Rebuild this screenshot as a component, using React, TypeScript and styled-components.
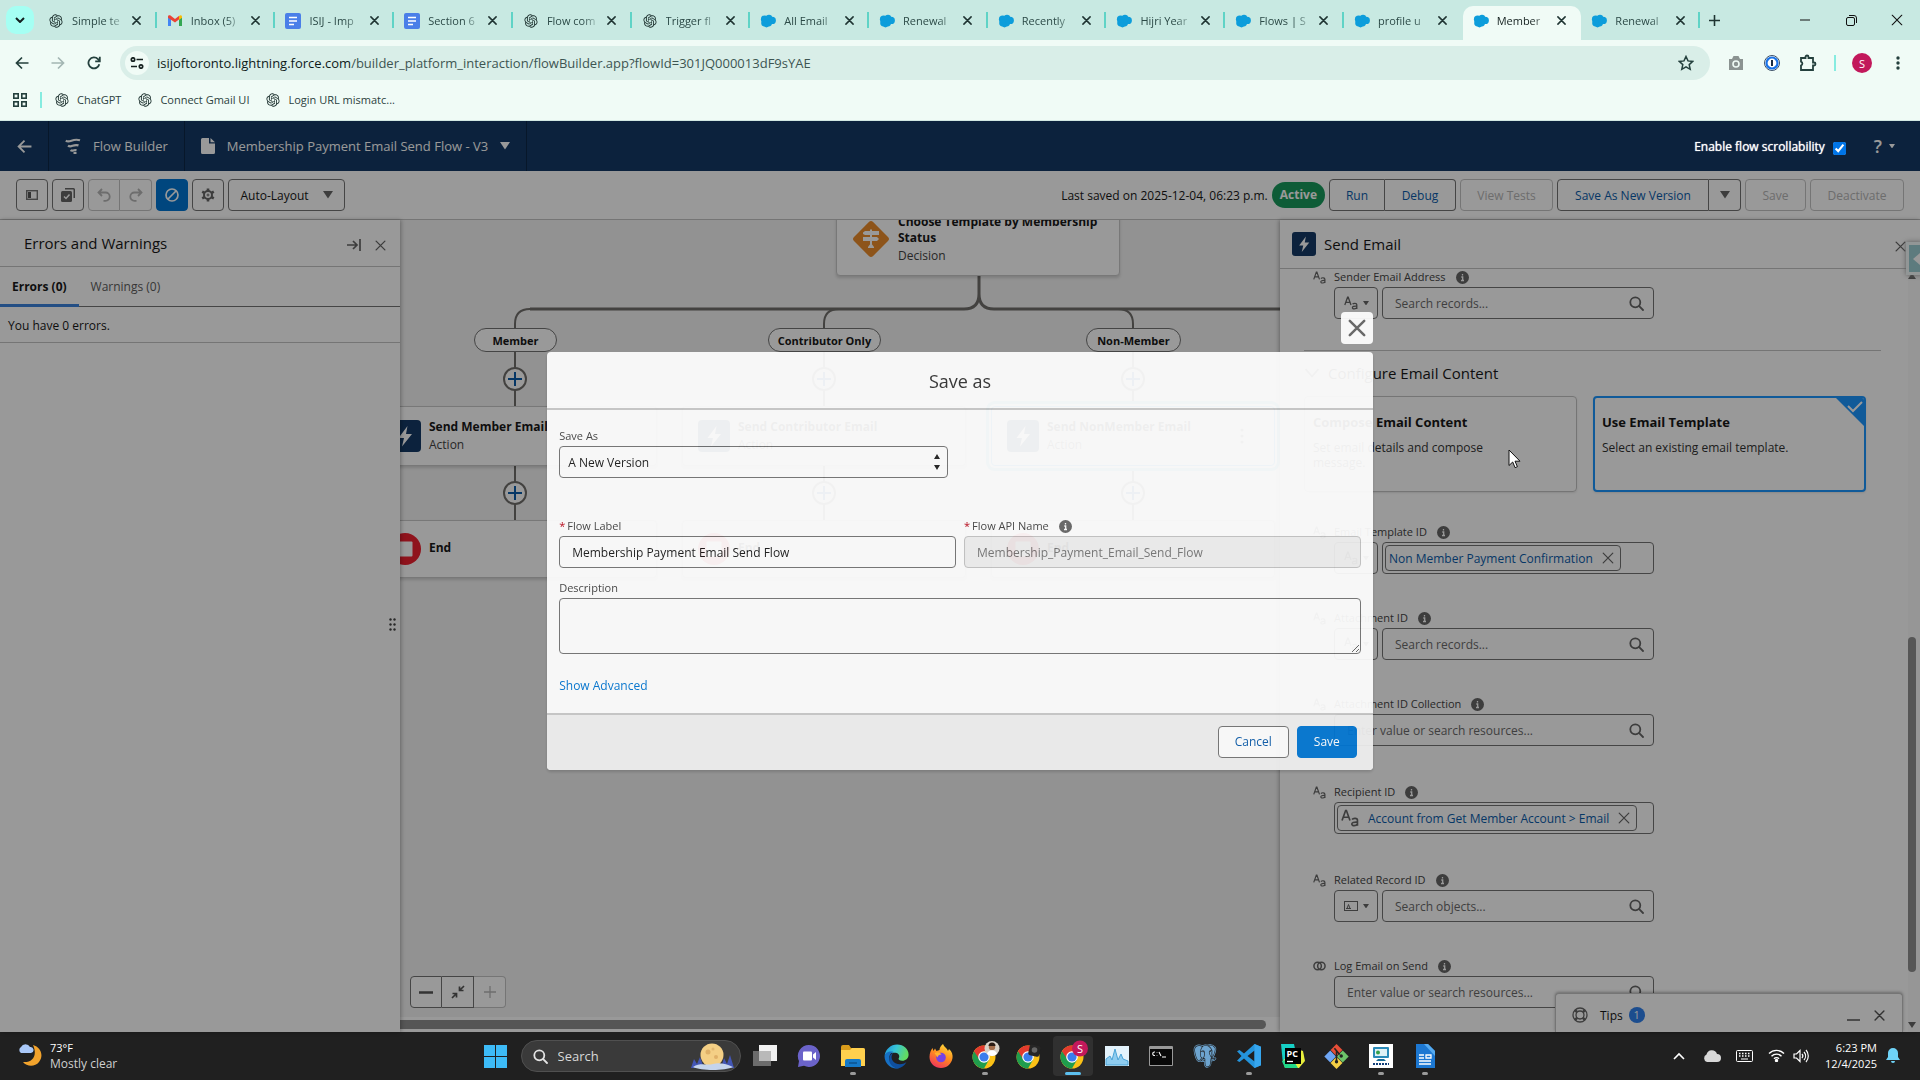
import React from "react";
import styled, { createGlobalStyle, css } from "styled-components";
import { RiOpenaiFill } from "react-icons/ri";
import { BiLogoPostgresql } from "react-icons/bi";

const Global = createGlobalStyle`
  *, *::before, *::after { box-sizing: border-box; }
  body { margin: 0; overflow: hidden; font-family: "Open Sans", "Noto Sans", sans-serif; font-size: 12px; color: #181818; }
  button, input, select, textarea { font: inherit; color: inherit; margin: 0; }
  button { background: none; border: 0; padding: 0; display: inline-flex; align-items: center; justify-content: center; }
  h1, h2, h3, p { margin: 0; font-weight: 400; }
  svg { display: block; flex: none; }
  a { text-decoration: none; }
`;

const Screen = styled.div`
  height: 100vh;
  display: flex;
  flex-direction: column;
`;

/* ---------- Browser ---------- */

const TabStrip = styled.div`
  flex: none;
  height: 40px;
  background: #c8e9e2;
  display: flex;
  padding-left: 6px;
`;
const TabSearch = styled.button`
  width: 28px;
  height: 28px;
  margin-top: 6px;
  border-radius: 10px;
  background: #a5fff3;
`;
const TabList = styled.div`
  flex: 1;
  display: flex;
  min-width: 0;
  margin-left: 4px;
`;
const Tab = styled.div<{ $active?: boolean; $bare?: boolean }>`
  flex: 1;
  min-width: 0;
  height: 34px;
  margin-top: 6px;
  padding: 0 10px 5px;
  display: flex;
  align-items: center;
  gap: 8px;
  position: relative;
  color: #2c4a47;
  &::after {
    content: "";
    position: absolute;
    right: 0;
    top: 6px;
    width: 2px;
    height: 16px;
    background: ${(p) => (p.$active || p.$bare ? "transparent" : "#5fd3c6")};
  }
  ${(p) =>
    p.$active &&
    css`
      background: #f0fbf6;
      border-radius: 10px 10px 0 0;
      color: #14201f;
    `}
`;
const TabTitle = styled.span`
  flex: 1;
  min-width: 0;
  white-space: nowrap;
  font-size: 11px;
  line-height: 20px;
  mask-image: linear-gradient(90deg, #000 70%, rgba(0, 0, 0, 0.15) 100%);
`;
const TabClose = styled.button`
  width: 12px;
  height: 16px;
  margin-right: 4px;
`;
const WindowButtons = styled.div`
  width: 220px;
  display: flex;
  align-items: center;
  padding: 0 13px 0 4px;
  color: #1c2b2a;
`;
const WindowControls = styled.div`
  display: flex;
  gap: 26px;
  margin-left: auto;
`;
const IconButton = styled.button<{ $size?: number }>`
  width: ${(p) => p.$size ?? 20}px;
  height: ${(p) => p.$size ?? 20}px;
`;
const AddressRow = styled.div`
  flex: none;
  height: 46px;
  background: #f0fbf6;
  display: flex;
  align-items: center;
  padding: 0 12px;
  gap: 16px;
`;
const Omnibox = styled.div`
  flex: 1;
  height: 34px;
  border-radius: 17px;
  background: #d9eee8;
  display: flex;
  align-items: center;
  padding: 0 14px 0 5px;
  gap: 8px;
`;
const SiteInfo = styled.button`
  width: 24px;
  height: 24px;
  border-radius: 50%;
  background: #f0fbf6;
`;
const Url = styled.div`
  flex: 1;
  font-size: 13px;
  line-height: 20px;
  color: #3d5552;
  b { font-weight: 400; color: #0e1b1a; }
`;
const BrowserTools = styled.div`
  display: flex;
  align-items: center;
  gap: 16px;
`;
const Rule = styled.span`
  width: 2px;
  height: 16px;
  background: #86ece0;
`;
const Avatar = styled.span`
  width: 20px;
  height: 20px;
  border-radius: 50%;
  background: #c2185b;
  color: #fff;
  font-size: 11px;
  display: flex;
  align-items: center;
  justify-content: center;
`;
const Bookmarks = styled.div`
  flex: none;
  height: 35px;
  background: #f0fbf6;
  border-bottom: 1px solid #d2e8e3;
  display: flex;
  align-items: center;
  gap: 12px;
  padding: 0 12px 6px;
`;
const Bookmark = styled.a`
  display: flex;
  align-items: center;
  gap: 7px;
  margin-right: 4px;
  font-size: 11px;
  line-height: 16px;
  color: #2c4240;
`;

/* ---------- Builder frame ---------- */

const Builder = styled.div`
  flex: 1;
  min-height: 0;
  position: relative;
  display: flex;
  flex-direction: column;
  background: #fff;
`;
const Header = styled.header`
  flex: none;
  height: 50px;
  background: #143a66;
  color: #fff;
  display: flex;
`;
const HeaderCell = styled.div`
  display: flex;
  align-items: center;
  gap: 12px;
  padding: 0 16px;
  border-right: 1px solid #0d2747;
  font-size: 13px;
  line-height: 20px;
`;
const HeaderRight = styled.div`
  margin-left: auto;
  display: flex;
  align-items: center;
  gap: 28px;
  padding-right: 25px;
`;
const ScrollToggle = styled.label`
  position: relative;
  z-index: 3;
  display: flex;
  align-items: center;
  gap: 8px;
  font-size: 12px;
  text-shadow: 0 0 1px #fff;
  input { width: 13px; height: 13px; accent-color: #0075e8; margin: 4px 0 0; }
`;
const HelpButton = styled.button`
  gap: 7px;
  font-size: 18px;
  font-weight: 600;
`;
const Toolbar = styled.div`
  flex: none;
  height: 49px;
  display: flex;
  align-items: center;
  gap: 4px;
  padding: 0 16px;
  border-bottom: 1px solid #c4c4c4;
`;
const Spacer = styled.span`
  flex: 1;
`;
const Group = styled.div`
  display: flex;
  > button:not(:first-child) { border-left-width: 0; border-top-left-radius: 0; border-bottom-left-radius: 0; }
  > button:not(:last-child) { border-top-right-radius: 0; border-bottom-right-radius: 0; }
`;
const Button = styled.button<{ $kind?: "plain" | "brand" | "disabled"; $w?: number; $dark?: boolean }>`
  height: 32px;
  min-width: ${(p) => p.$w ?? 32}px;
  border: 1px solid #747474;
  border-radius: 4px;
  background: #fff;
  font-size: 12px;
  color: ${(p) => (p.$dark ? "#181818" : "#0b5cab")};
  gap: 14px;
  white-space: nowrap;
  ${(p) => p.$kind === "brand" && css`background: #0176d3; border-color: #0176d3; color: #fff;`}
  ${(p) => p.$kind === "disabled" && css`border-color: #c4c4c4; color: #b6b6b6;`}
`;
const Saved = styled.span`
  font-size: 12px;
`;
const ActiveBadge = styled.span`
  height: 26px;
  padding: 0 8px;
  border-radius: 13px;
  background: #189a5c;
  color: #fff;
  font-weight: 700;
  font-size: 12px;
  line-height: 26px;
`;
const Work = styled.div`
  flex: 1;
  min-height: 0;
  display: flex;
`;

/* ---------- Left panel ---------- */

const LeftPanel = styled.aside`
  width: 400px;
  flex: none;
  position: relative;
  z-index: 1;
  background: #fff;
  box-shadow: 1px 0 4px rgba(0, 0, 0, 0.3);
`;
const PanelHead = styled.div`
  height: 47px;
  display: flex;
  align-items: center;
  gap: 10px;
  padding: 0 12px 0 24px;
  border-bottom: 1px solid #c4c4c4;
  h2 { flex: 1; font-size: 15px; line-height: 20px; }
  button { margin-top: 4px; }
`;
const PanelTabs = styled.div`
  height: 40px;
  display: flex;
  border-bottom: 1px solid #747474;
`;
const PanelTab = styled.button<{ $on?: boolean }>`
  height: 40px;
  padding: 2px 12px 0;
  font-size: 12px;
  color: ${(p) => (p.$on ? "#181818" : "#5c5c5c")};
  font-weight: ${(p) => (p.$on ? 700 : 400)};
  border-bottom: 3px solid ${(p) => (p.$on ? "#3b82dd" : "transparent")};
`;
const PanelMessage = styled.p`
  height: 36px;
  padding: 0 8px;
  line-height: 37px;
  border-bottom: 1px solid #c4c4c4;
`;
const Grip = styled.span`
  position: absolute;
  right: 4px;
  top: 49%;
`;

/* ---------- Canvas ---------- */

const CanvasArea = styled.main`
  flex: 1;
  min-width: 0;
  display: flex;
  flex-direction: column;
`;
const Canvas = styled.div`
  flex: 1;
  position: relative;
  overflow: hidden;
  background: #f3f3f3;
`;
const Wires = styled.svg`
  position: absolute;
  left: 0;
  top: 0;
`;
const Node = styled.div<{ $x: number; $y: number; $h: number; $selected?: boolean }>`
  position: absolute;
  left: ${(p) => p.$x}px;
  top: ${(p) => p.$y}px;
  width: 284px;
  height: ${(p) => p.$h}px;
  padding: 0 12px 0 15px;
  display: flex;
  align-items: center;
  gap: 8px;
  background: #fff;
  border: 1px solid #c9c9c9;
  border-radius: 4px;
  box-shadow: 0 2px 3px rgba(0, 0, 0, 0.15);
  ${(p) => p.$selected && css`border-color: #1b96ff; box-shadow: 0 0 0 2px #fff, 0 0 0 5px #5fc3dd;`}
`;
const NodeText = styled.div`
  flex: 1;
  font-size: 12px;
  line-height: 16px;
  color: #444;
  h3 { font-size: 12px; line-height: 16px; font-weight: 700; color: #181818; margin-bottom: 2px; }
`;
const Branch = styled.span<{ $x: number; $w: number }>`
  position: absolute;
  left: ${(p) => p.$x}px;
  top: 108px;
  width: ${(p) => p.$w}px;
  height: 24px;
  border: 1px solid #747474;
  border-radius: 12px;
  background: #fff;
  font-weight: 700;
  font-size: 11px;
  line-height: 23px;
  text-align: center;
`;
const AddButton = styled.button<{ $x: number; $y: number }>`
  position: absolute;
  left: ${(p) => p.$x - 12}px;
  top: ${(p) => p.$y}px;
  width: 24px;
  height: 24px;
  border-radius: 50%;
  border: 2px solid #706e6b;
  background: #fff;
`;
const ZoomBar = styled.div`
  position: absolute;
  left: 10px;
  bottom: 9px;
`;
const HScroll = styled.div`
  height: 15px;
  background: #fff;
  padding: 3px 14px 3px 0;
  &::before {
    content: "";
    display: block;
    height: 9px;
    border-radius: 0 5px 5px 0;
    background: #8f8f8f;
  }
`;

/* ---------- Right panel ---------- */

const RightPanel = styled.aside`
  width: 640px;
  flex: none;
  position: relative;
  z-index: 1;
  background: #fff;
  box-shadow: -1px 0 4px rgba(0, 0, 0, 0.3);
  display: flex;
  flex-direction: column;
`;
const PropertyHead = styled.div`
  flex: none;
  height: 49px;
  padding: 0 14px 0 12px;
  display: flex;
  align-items: center;
  gap: 8px;
  border-bottom: 1px solid #c4c4c4;
  h2 { flex: 1; font-size: 15px; line-height: 20px; }
  button { margin-top: 4px; }
`;
const PropertyBody = styled.div`
  flex: 1;
  min-height: 0;
  display: flex;
  overflow: hidden;
`;
const Form = styled.div`
  flex: 1;
  padding-left: 24px;
`;
const VScroll = styled.div`
  width: 12px;
  background: #fafafa;
  display: flex;
  flex-direction: column;
  align-items: center;
  padding: 4px 4px 4px 0;
`;
const VThumb = styled.span`
  width: 8px;
  border-radius: 4px;
  background: #8f8f8f;
  margin-top: 358px;
  flex: 0 0 335px;
  margin-bottom: auto;
`;
const Field = styled.div<{ $gap?: number }>`
  margin-bottom: ${(p) => p.$gap ?? 36}px;
  padding-left: 30px;
`;
const FieldLabel = styled.div`
  height: 16px;
  margin: 0 0 2px -21px;
  display: flex;
  align-items: center;
  gap: 8px;
  color: #444;
  font-size: 11px;
  line-height: 16px;
  > svg:last-child { margin-left: 2px; }
`;
const FieldRow = styled.div`
  display: flex;
  gap: 4px;
  width: 320px;
`;
const TypeButton = styled.button`
  width: 44px;
  height: 32px;
  flex: none;
  border: 1px solid #747474;
  border-radius: 4px;
  gap: 5px;
`;
const Lookup = styled.div`
  flex: 1;
  min-width: 0;
  height: 32px;
  border: 1px solid #747474;
  border-radius: 4px;
  display: flex;
  align-items: center;
  padding: 0 9px 0 2px;
  input {
    flex: 1;
    min-width: 0;
    border: 0;
    background: none;
    outline: 0;
    padding: 0 10px;
    font-size: 12px;
  }
  input::placeholder { color: #6a6a6a; }
`;
const Pill = styled.span`
  height: 26px;
  border: 1px solid #747474;
  border-radius: 4px;
  display: flex;
  align-items: center;
  gap: 9px;
  padding: 0 6px 0 3px;
  font-size: 12px;
  color: #0b5cab;
  white-space: nowrap;
`;
const SectionTitle = styled.h3`
  border-top: 1px solid #c4c4c4;
  margin: -5px 27px 0 0;
  height: 46px;
  padding-bottom: 2px;
  display: flex;
  align-items: center;
  gap: 8px;
  font-size: 15px;
`;
const Choices = styled.div`
  display: flex;
  gap: 16px;
  width: 562px;
  margin-bottom: 32px;
`;
const Choice = styled.button<{ $on?: boolean }>`
  flex: 1;
  height: 96px;
  position: relative;
  overflow: hidden;
  border: ${(p) => (p.$on ? "2px solid #1b96ff" : "1px solid #c4c4c4")};
  padding: ${(p) => (p.$on ? "16px 7px" : "17px 8px")};
  border-radius: 4px;
  box-shadow: 0 1px 2px rgba(0, 0, 0, 0.1);
  display: flex;
  flex-direction: column;
  align-items: flex-start;
  justify-content: flex-start;
  gap: 10px;
  text-align: left;
  color: #333;
  line-height: 15px;
  b { font-size: 13px; line-height: 16px; color: #181818; }
  span { max-width: 190px; }
`;
const Corner = styled.svg`
  position: absolute;
  right: 0;
  top: 0;
`;
const Tips = styled.div`
  position: absolute;
  right: 17px;
  bottom: 0;
  width: 348px;
  height: 39px;
  background: #fff;
  border: 1px solid #c4c4c4;
  border-bottom: 0;
  border-radius: 4px 4px 0 0;
  box-shadow: 0 -1px 3px rgba(0, 0, 0, 0.3);
  display: flex;
  align-items: center;
  padding: 4px 13px 0 16px;
  gap: 6px;
  font-size: 12px;
  strong { font-weight: 400; margin-left: 6px; }
`;
const Count = styled.span`
  width: 16px;
  height: 16px;
  border-radius: 50%;
  background: #2f80ed;
  color: #fff;
  font-size: 11px;
  line-height: 16px;
  text-align: center;
`;
const SideHandle = styled.button`
  position: absolute;
  right: 0;
  top: 25px;
  width: 11px;
  height: 27px;
  background: #9cced3;
  box-shadow: 0 0 0 3px #f4fbfb, 0 0 5px 3px #999;
  justify-content: flex-end;
`;

/* ---------- Dialog ---------- */

const Overlay = styled.div`
  position: absolute;
  inset: 0;
  z-index: 2;
  background: rgba(0, 0, 0, 0.4);
  display: flex;
  flex-direction: column;
  align-items: center;
  padding-top: 191px;
`;
const Dialog = styled.div`
  width: 43%;
  min-width: 640px;
  opacity: 0.93;
  display: flex;
  flex-direction: column;
`;
const DialogClose = styled.button`
  align-self: flex-end;
  width: 32px;
  height: 32px;
  margin-bottom: 8px;
  border-radius: 4px;
  background: #fff;
`;
const DialogCard = styled.form`
  border-radius: 4px;
  background: #fff;
  overflow: hidden;
  box-shadow: 0 2px 3px rgba(0, 0, 0, 0.16);
`;
const DialogTitle = styled.h2`
  height: 58px;
  border-bottom: 2px solid #c9c9c9;
  font-size: 18px;
  line-height: 58px;
  text-align: center;
  color: #333;
`;
const DialogBody = styled.div`
  padding: 18px 12px 17px;
  display: grid;
  grid-template-columns: 1fr 1fr;
  column-gap: 8px;
`;
const Item = styled.div<{ $wide?: boolean; $below?: number }>`
  grid-column: ${(p) => (p.$wide ? "1 / -1" : "auto")};
  margin-bottom: ${(p) => p.$below ?? 12}px;
  label {
    display: flex;
    align-items: center;
    gap: 2px;
    font-size: 11px;
    line-height: 16px;
    margin-bottom: 2px;
    color: #444;
  }
  em { color: #ba0517; font-style: normal; }
  label svg { margin-left: 8px; }
`;
const controlLook = css`
  display: block;
  width: 100%;
  height: 32px;
  border: 1px solid #747474;
  border-radius: 4px;
  background: transparent;
  padding: 0 12px;
  font-size: 12px;
`;
const SelectWrap = styled.div`
  width: calc(50% - 12px);
  position: relative;
  svg { position: absolute; right: 7px; top: 7px; pointer-events: none; }
`;
const Select = styled.select`
  ${controlLook}
  appearance: none;
  padding: 0 8px;
`;
const TextInput = styled.input`
  ${controlLook}
  &:disabled { background: #f0f0f0; border-color: #c4c4c4; color: #757575; }
`;
const TextArea = styled.textarea`
  ${controlLook}
  height: 56px;
  resize: vertical;
`;
const Advanced = styled.a`
  grid-column: 1 / -1;
  justify-self: start;
  margin-top: 10px;
  font-size: 12px;
  line-height: 20px;
  color: #0176d3;
`;
const DialogFooter = styled.div`
  height: 57px;
  background: #f0f0f0;
  border-top: 2px solid #c9c9c9;
  display: flex;
  align-items: center;
  justify-content: flex-end;
  gap: 8px;
  padding: 0 16px 2px 0;
`;
const Pointer = styled.svg`
  position: absolute;
  left: 1508px;
  top: 328px;
  z-index: 4;
`;

/* ---------- Taskbar ---------- */

const Taskbar = styled.footer`
  flex: none;
  height: 48px;
  background: #202020;
  color: #fff;
  display: grid;
  grid-template-columns: 1fr auto 1fr;
  font-size: 12px;
  line-height: 16px;
`;
const Weather = styled.div`
  display: flex;
  align-items: center;
  gap: 8px;
  padding-left: 18px;
  font-size: 11px;
  span { color: #cfcfcf; display: block; font-size: 12px; }
`;
const Apps = styled.div`
  display: flex;
  align-items: center;
`;
const AppButton = styled.button<{ $state?: "running" | "active" }>`
  width: 44px;
  height: 48px;
  position: relative;
  &::before {
    content: "";
    position: absolute;
    inset: 4px 2px;
    border-radius: 4px;
    background: ${(p) => (p.$state === "active" ? "#303030" : "transparent")};
  }
  &::after {
    content: "";
    position: absolute;
    bottom: 5px;
    height: 3px;
    border-radius: 2px;
    width: ${(p) => (p.$state === "active" ? 16 : 6)}px;
    background: ${(p) => (p.$state === "active" ? "#5cc0f0" : p.$state ? "#9a9a9a" : "transparent")};
  }
  svg { position: relative; }
`;
const SearchPill = styled.label`
  width: 220px;
  height: 32px;
  margin: 0 2px 0 3px;
  border: 1px solid #505050;
  border-radius: 16px;
  background: #3a3a3a;
  display: flex;
  align-items: center;
  gap: 10px;
  padding: 0 5px 0 11px;
  input { flex: 1; min-width: 0; border: 0; background: none; outline: 0; padding: 0; font-size: 13px; }
  input::placeholder { color: #d8d8d8; }
`;
const Tray = styled.div`
  display: flex;
  align-items: center;
  justify-content: flex-end;
  padding-right: 19px;
  gap: 15px;
`;
const Sound = styled.div`
  display: flex;
  gap: 8px;
`;
const Clock = styled.div`
  text-align: right;
  font-size: 11px;
  line-height: 16px;
`;
const ClockGroup = styled.div`
  display: flex;
  align-items: center;
  gap: 8px;
`;

/* ---------- Icons ---------- */

const Cross = ({ s = 10, w = 1.6, c = "#444" }) => (
  <svg width={s} height={s} viewBox="0 0 10 10" stroke={c} strokeWidth={w} strokeLinecap="round">
    <path d="M1 1l8 8M9 1L1 9" />
  </svg>
);
const Cloud = () => (
  <svg width="16" height="16" viewBox="0 0 16 16" fill="#0d9ddb">
    <circle cx="4.600" cy="6.200" r="3.700" /><circle cx="9" cy="5" r="3.200" /><circle cx="12.200" cy="7.400" r="3.700" /><circle cx="8.600" cy="10" r="3.400" /><circle cx="4.600" cy="10" r="3.400" /><circle cx="6.500" cy="12" r="2.400" />
  </svg>
);
const Docs = () => (
  <svg width="16" height="16" viewBox="0 0 16 16">
    <rect width="16" height="16" rx="2" fill="#4a7fe8" />
    <path d="M4 4.500h8M4 8h8M4 11.500h5" stroke="#fff" strokeWidth="1.600" />
  </svg>
);
const Gmail = () => (
  <svg width="16" height="16" viewBox="0 0 16 16">
    <path d="M1 4v9h3V6z" fill="#4285f4" /><path d="M15 4v9h-3V6z" fill="#34a853" />
    <path d="M1 3.800C1 2.200 2.800 2 3.800 2.800L8 6l4.200-3.200v3.500L8 9.500 1 4.800z" fill="#ea4335" />
    <path d="M12 3l1-.6c1-.4 2 .3 2 1.400v1L12 7z" fill="#fbbc04" />
  </svg>
);
const Gpt = () => <RiOpenaiFill size={16} color="#1f3331" />;
const Triangle = ({ s = 8, c = "#666", up = false }) => (
  <svg width={s} height={s * 0.75} viewBox="0 0 8 6" fill={c}><path d={up ? "M0 6h8L4 0z" : "M0 0h8L4 6z"} /></svg>
);
const Info = () => (
  <svg width="13" height="13" viewBox="0 0 13 13">
    <circle cx="6.500" cy="6.500" r="6.500" fill="#666" />
    <path d="M6.500 3v1.600M5.300 6h1.400v3.500M5 9.500h3" stroke="#fff" strokeWidth="1.300" fill="none" />
  </svg>
);
const TypeText = ({ s = 14 }) => (
  <svg width={s} height={s} viewBox="0 0 14 14" fill="none" stroke="#666" strokeWidth="1.300">
    <path d="M.8 9L3.600 1.200h.6L7 9M1.800 6.400h4.200M8.600 8.200c.8-1.200 4.200-1.400 4.200.6V13M12.800 10.200c-3-.2-4.400.4-4.400 1.500 0 1.600 3.400 1.700 4.400-.2" />
  </svg>
);
const Glass = ({ c = "#666", s = 15 }) => (
  <svg width={s} height={s} viewBox="0 0 15 15" fill="none" stroke={c} strokeWidth="1.800" strokeLinecap="round"><circle cx="6.300" cy="6.300" r="5" /><path d="M10.200 10.200L14 14" /></svg>
);
const Bolt = ({ s = 32 }) => (
  <svg width={s} height={s} viewBox="0 0 32 32"><rect width="32" height="32" rx="4" fill="#143a66" /><path d="M18.500 6l-9 12h5.500l-2 8.500 10-12.500h-6z" fill="#fff" /></svg>
);
const EndIcon = () => (
  <svg width="32" height="32" viewBox="0 0 32 32"><circle cx="16" cy="16" r="16" fill="#ee2030" /><rect x="8.500" y="8.500" width="15" height="15" rx="1" fill="#fff" /></svg>
);
const Diamond = () => (
  <svg width="38" height="38" viewBox="0 0 38 38">
    <rect x="5.500" y="5.500" width="27" height="27" rx="3" transform="rotate(45 19 19)" fill="#ec8d2c" />
    <path d="M11 12.500l2-1.500h14v4H13l-2-1zM11 17h14l2 2-2 2H11zM18 9.500h2V25h-2zM16 27l3-4 3 4v1h-6z" fill="#fff" />
  </svg>
);
const Plus = ({ c = "#0b5cab", s = 14, w = 2 }) => (
  <svg width={s} height={s} viewBox="0 0 14 14" stroke={c} strokeWidth={w}><path d="M7 0v14M0 7h14" /></svg>
);
const Arrow = ({ c = "#24403d", flip = false, s = 14 }) => (
  <svg width={s} height={s} viewBox="0 0 14 14" fill="none" stroke={c} strokeWidth="1.700" transform={flip ? "scale(-1 1)" : undefined}><path d="M13.500 7H1.500M7 1.500L1.500 7 7 12.500" /></svg>
);
const Undo = ({ flip = false }) => (
  <svg width="14" height="14" viewBox="0 0 14 14" fill="none" stroke="#b6b6b6" strokeWidth="1.800" transform={flip ? "scale(-1 1)" : undefined}><path d="M5 1L1.500 4.500 5 8M1.800 4.500h6.700a4.200 4.200 0 010 8.400H6.500" /></svg>
);
const Chrome = ({ badge }: { badge?: "photo" | "device" | "letter" }) => (
  <svg width="30" height="32" viewBox="0 0 30 32">
    <circle cx="14" cy="17" r="11.500" fill="#fbc116" />
    <path d="M14 17L4 11.300A11.500 11.500 0 0014 28.500l5-8.700z" fill="#1f9d4d" />
    <path d="M4 11.300A11.500 11.500 0 0124 11.300H14L9.500 19.500z" fill="#e33b2e" />
    <circle cx="14" cy="17" r="5.800" fill="#fff" /><circle cx="14" cy="17" r="4.600" fill="#3b7ded" />
    {badge === "photo" && (<><circle cx="22" cy="8.500" r="7.500" fill="#d9d2c8" /><circle cx="22" cy="7" r="3.200" fill="#a56f4c" /><path d="M18.500 6a3.500 3.500 0 017 0z" fill="#2b1c14" /><path d="M17 14c1-5 9-5 10 0a7.500 7.500 0 01-10 0z" fill="#fff" /></>)}
    {badge === "device" && (<><rect x="15" y="5" width="11" height="11" rx="2" transform="rotate(12 20 10)" fill="#262626" /><circle cx="20.500" cy="10" r="2.800" fill="#666" /></>)}
    {badge === "letter" && (<><circle cx="22" cy="8.500" r="8" fill="#c2185b" /><text x="22" y="12.500" fontSize="11" textAnchor="middle" fill="#fff">S</text></>)}
  </svg>
);

const appIcons: { name: string; state?: "running" | "active"; icon: React.ReactNode }[] = [
  { name: "Task view", icon: <svg width="24" height="24" viewBox="0 0 24 24"><rect x="6" y="1" width="18" height="16" fill="#f2f2f2" /><rect x="0" y="7" width="18" height="15" fill="#6c6c6c" /><rect x="6" y="7" width="12" height="10" fill="#b9b9b9" /></svg> },
  { name: "Chat", icon: <svg width="24" height="24" viewBox="0 0 24 24"><path d="M12 1a11 11 0 11-5 20.800L1 23l1-6A11 11 0 0112 1z" fill="#6b63c9" /><rect x="6" y="7.500" width="9" height="9" rx="1" fill="#fff" /><path d="M16 10.500l3-2.500v8l-3-2.500z" fill="#fff" /></svg> },
  { name: "File Explorer", state: "running", icon: <svg width="26" height="24" viewBox="0 0 26 24"><path d="M1 3a2 2 0 012-2h6l2 3h12a2 2 0 012 2v4H1z" fill="#d99c1b" /><path d="M1 6h9l2-2h11a2 2 0 012 2v16H1z" fill="#ffd04e" /><path d="M5 23v-6a2 2 0 012-2h12a2 2 0 012 2v6z" fill="#1579c8" /><path d="M9 19h8" stroke="#0d538f" strokeWidth="1.500" /></svg> },
  { name: "Edge", icon: (
    <svg width="25" height="25" viewBox="0 0 24 24">
      <defs><linearGradient id="edgeTop" x1="0" y1="0" x2="1" y2=".3"><stop offset="0" stopColor="#1c8fdc" /><stop offset=".5" stopColor="#38c5d6" /><stop offset="1" stopColor="#62dc62" /></linearGradient></defs>
      <path d="M.6 11C1.500 5 6.500.5 12.500.5 19 .5 23.600 5 23.600 10c0 4-3 6-6 6-2.500 0-4-1-3.600-2 1.500-2 .5-5-3-5.500C6 8 2.500 8.500.6 11z" fill="url(#edgeTop)" />
      <path d="M.5 12C1 8 5 6.500 9 7.500c-4 1.500-5 6-3 10 2 3.800 6 6 9 5.500A11.500 11.500 0 01.5 12z" fill="#1670c4" />
      <path d="M9 8.500c-3 3-2 8 2 10 3.500 1.600 7.500 1 10.500-1-2 3.500-5 5.500-8.500 6-5-.5-8.500-5-8-9.500C5.300 11.500 6.500 9.500 9 8.500z" fill="#0f4f9e" />
    </svg>) },
  { name: "Firefox", icon: (
    <svg width="24" height="24" viewBox="0 0 24 24">
      <defs><linearGradient id="foxFire" x1=".8" y1="0" x2=".3" y2="1"><stop offset="0" stopColor="#ffe23c" /><stop offset=".5" stopColor="#ff8a1f" /><stop offset="1" stopColor="#f0345d" /></linearGradient></defs>
      <path d="M14 0c1 3 4 4 5 7l1-2c3 2.500 4 6 3.500 9C22.500 20 18 24 12 24S.5 19.500.5 13c0-4 1.500-7 3-9l1 3L6 4.500 7.500 7l3-1C10.500 3.500 12 1.500 14 0z" fill="url(#foxFire)" />
      <circle cx="12" cy="13.500" r="4.800" fill="#7542e5" />
      <path d="M5.500 9c3-1.500 5.500-.5 7 1.500-2.500.3-3.500 1-4 3z" fill="#ffb12e" />
    </svg>) },
  { name: "Chrome, first profile", state: "running", icon: <Chrome badge="photo" /> },
  { name: "Chrome, second profile", icon: <Chrome badge="device" /> },
  { name: "Chrome, profile S", state: "active", icon: <Chrome badge="letter" /> },
  { name: "Monitor", icon: <svg width="24" height="20" viewBox="0 0 24 20"><rect width="24" height="20" fill="#e3f2fb" /><path d="M1 19v-6l4-3 2 4 3-11 3 11 3-6 2 5 5 2v4z" fill="#8fcdf0" stroke="#4ba3d6" /></svg> },
  { name: "Command Prompt", icon: <svg width="24" height="20" viewBox="0 0 24 20"><rect width="24" height="20" rx="1" fill="#999" /><rect x="1" y="3" width="22" height="16" fill="#080808" /><path d="M6 6c-3-.6-3 4 0 3.500M8 6.500v.6M8 9v.6M10 6l2 4M13 11h4" stroke="#fff" strokeWidth="1.100" fill="none" /></svg> },
  { name: "PostgreSQL", icon: <BiLogoPostgresql size={28} color="#6da4cf" /> },
  { name: "Visual Studio Code", state: "running", icon: <svg width="24" height="24" viewBox="0 0 24 24"><path d="M17.500 0L24 2.800v18.400L17.500 24 7 14.500 2.500 18 0 16.800 4.500 12 0 7.200 2.500 6 7 9.500zM17.500 6.500L10.500 12l7 5.500z" fill="#2494dc" fillRule="evenodd" /><path d="M17.500 0L24 2.800v18.400L17.500 24z" fill="#36a6ee" /></svg> },
  { name: "PyCharm", icon: <svg width="24" height="24" viewBox="0 0 24 24"><path d="M0 0h13l3 14L2 20z" fill="#16cfc5" /><path d="M13 4l9 3 2 10-6 7H4l-2-7z" fill="#e8ee3c" /><path d="M1 17l10-3 6 10H4z" fill="#21d789" /><rect x="4" y="4" width="16" height="16" fill="#000" /><text x="5.500" y="13" fontSize="9" fontWeight="700" fill="#fff">PC</text><path d="M6 17.500h6" stroke="#fff" strokeWidth="1.300" /></svg> },
  { name: "Git", icon: <svg width="25" height="25" viewBox="0 0 24 24"><path d="M12 0l5.700 5.700L12 11.500 6.300 5.700z" fill="#e84e37" /><path d="M6 6.200l5.500 5.800L6 17.700.3 12z" fill="#6fa6f5" /><path d="M18 6.200l5.700 5.800-5.700 5.700-5.700-5.700z" fill="#6cc46a" /><path d="M12 12.300l5.700 5.900L12 24l-5.700-5.800z" fill="#f4cf45" /><path d="M10 4l5 6M12 6v11M17 11v1" stroke="#222" strokeWidth="1.500" /><circle cx="12" cy="17" r="1.600" fill="#222" /><circle cx="16.500" cy="11.500" r="1.600" fill="#222" /></svg> },
  { name: "Desktop tool", state: "running", icon: <svg width="24" height="24" viewBox="0 0 24 24"><rect width="24" height="24" fill="#fff" /><rect x="4" y="3" width="16" height="11" rx="1" fill="#2a8ab8" /><rect x="6" y="5" width="12" height="7" fill="#dff1f5" /><circle cx="9" cy="8.500" r="2" fill="#35a04a" /><path d="M9 15h6l2 2H7z" fill="#176a94" /><path d="M4 20h16" stroke="#123f7a" strokeWidth="2" strokeDasharray="2 1" /></svg> },
  { name: "Writer", state: "running", icon: <svg width="20" height="24" viewBox="0 0 20 24"><path d="M1 0h12l7 7v17H1z" fill="#1d78d2" /><path d="M13 0l7 7v5L9 0z" fill="#55aaf0" /><path d="M4 11h5M4 14h5M4 17h12M4 20h12M11 11h5v3h-5z" stroke="#fff" strokeWidth="1.300" fill="none" /></svg> },
];

const tabs = [
  ["Simple te", "gpt"], ["Inbox (5)", "gmail"], ["ISIJ - Imp", "docs"], ["Section 6", "docs"], ["Flow com", "gpt"], ["Trigger fl", "gpt"],
  ["All Email", "sf"], ["Renewal", "sf"], ["Recently", "sf"], ["Hijri Year", "sf"], ["Flows | S", "sf"], ["profile u", "sf"], ["Member", "sf"], ["Renewal", "sf"],
];
const tabIcon: Record<string, React.ReactNode> = { gpt: <Gpt />, gmail: <Gmail />, docs: <Docs />, sf: <Cloud /> };

function Browser() {
  return (
    <>
      <TabStrip>
        <TabSearch aria-label="Search tabs"><svg width="10" height="6" viewBox="0 0 10 6" fill="none" stroke="#14201f" strokeWidth="2"><path d="M1 1l4 4 4-4" /></svg></TabSearch>
        <TabList>
          {tabs.map(([title, icon], i) => (
            <Tab key={i} $active={i === 12} $bare={i === 11}>
              {tabIcon[icon]}
              <TabTitle>{title}</TabTitle>
              <TabClose aria-label="Close tab"><Cross s={9} w={1.7} c="#1f3432" /></TabClose>
            </Tab>
          ))}
        </TabList>
        <WindowButtons>
          <IconButton aria-label="New tab"><Plus c="#1f3432" s={11} w={2} /></IconButton>
          <WindowControls>
            <IconButton aria-label="Minimize"><svg width="10" height="2"><path d="M0 1h10" stroke="#111" /></svg></IconButton>
            <IconButton aria-label="Restore"><svg width="11" height="11" viewBox="0 0 11 11" fill="none" stroke="#111"><rect x=".5" y="2.500" width="8" height="8" rx="1.500" /><path d="M3 .5h5a2.500 2.500 0 012.500 2.500v5" /></svg></IconButton>
            <IconButton aria-label="Close window"><Cross s={12} w={0.9} c="#111" /></IconButton>
          </WindowControls>
        </WindowButtons>
      </TabStrip>
      <AddressRow>
        <IconButton aria-label="Back"><Arrow /></IconButton>
        <IconButton aria-label="Forward"><Arrow flip c="#a3b6b3" /></IconButton>
        <IconButton aria-label="Reload"><svg width="14" height="14" viewBox="0 0 14 14" fill="none" stroke="#24403d" strokeWidth="1.800"><path d="M12.300 8.200A5.500 5.500 0 1111 3.200L12.500 5" /><path d="M12.800.8v4.600H8.200" /></svg></IconButton>
        <Omnibox>
          <SiteInfo aria-label="Site information"><svg width="14" height="12" viewBox="0 0 14 12" fill="none" stroke="#14201f" strokeWidth="1.700"><circle cx="3" cy="2.500" r="1.700" /><path d="M6.500 2.500H13M1 9.500h6" /><circle cx="11" cy="9.500" r="1.700" /></svg></SiteInfo>
          <Url><b>isijoftoronto.lightning.force.com</b>/builder_platform_interaction/flowBuilder.app?flowId=301JQ000013dF9sYAE</Url>
          <IconButton aria-label="Bookmark this tab"><svg width="16" height="16" viewBox="0 0 16 16" fill="none" stroke="#24403d" strokeWidth="1.500"><path d="M8 1.500l2 4.400 4.800.5-3.600 3.200 1 4.700L8 11.900l-4.200 2.400 1-4.700L1.200 6.400 6 5.900z" /></svg></IconButton>
        </Omnibox>
        <BrowserTools>
          <IconButton aria-label="Screenshot"><svg width="16" height="14" viewBox="0 0 16 14"><path d="M1 3h3l1.500-3h5L12 3h3v11H1z" fill="#8b9391" /><circle cx="8" cy="8" r="3" fill="none" stroke="#f0fbf6" strokeWidth="1.600" /></svg></IconButton>
          <IconButton aria-label="Password manager"><svg width="16" height="16" viewBox="0 0 16 16"><circle cx="8" cy="8" r="7.500" fill="#fff" stroke="#3b4f66" /><circle cx="8" cy="8" r="5.500" fill="none" stroke="#1a73e8" strokeWidth="2.200" /><path d="M8 5v6" stroke="#1b2b40" strokeWidth="2" /></svg></IconButton>
          <IconButton aria-label="Extensions"><svg width="18" height="18" viewBox="0 0 18 18" fill="none" stroke="#24403d" strokeWidth="1.800"><path d="M2 4h4.500V3a1.500 1.500 0 013 0v1H14v4.500h1a1.500 1.500 0 010 3h-1V16H2v-4.500a2 2 0 000-3.800z" /></svg></IconButton>
          <Rule />
          <Avatar>S</Avatar>
          <IconButton aria-label="Menu"><svg width="4" height="14" viewBox="0 0 4 14" fill="#24403d"><circle cx="2" cy="2" r="1.700" /><circle cx="2" cy="7" r="1.700" /><circle cx="2" cy="12" r="1.700" /></svg></IconButton>
        </BrowserTools>
      </AddressRow>
      <Bookmarks>
        <IconButton $size={16} aria-label="Apps"><svg width="14" height="14" viewBox="0 0 14 14" fill="none" stroke="#24403d" strokeWidth="1.600"><rect x=".8" y=".8" width="4.400" height="4.400" /><rect x="8.800" y=".8" width="4.400" height="4.400" /><rect x=".8" y="8.800" width="4.400" height="4.400" /><rect x="8.800" y="8.800" width="4.400" height="4.400" /></svg></IconButton>
        <Rule />
        <Bookmark href="#"><Gpt />ChatGPT</Bookmark>
        <Bookmark href="#"><Gpt />Connect Gmail UI</Bookmark>
        <Bookmark href="#"><Gpt />Login URL mismatc...</Bookmark>
      </Bookmarks>
    </>
  );
}

function TopBars() {
  return (
    <>
      <Header>
        <HeaderCell><IconButton $size={16} aria-label="Back to setup"><Arrow c="#fff" s={15} /></IconButton></HeaderCell>
        <HeaderCell>
          <svg width="16" height="16" viewBox="0 0 16 16" fill="none" stroke="#fff" strokeWidth="2.200">
            <path d="M.8 2.600C5 5.500 7.500-.2 15 2.300M3 7.600c3.500 2.600 5-2 10.500-.2M5.500 12.200c2.200 1.600 3-.8 6 .2M8.500 15h3" />
          </svg>
          Flow Builder
        </HeaderCell>
        <HeaderCell>
          <svg width="14" height="16" viewBox="0 0 14 16" fill="#fff"><path d="M0 1.500A1.500 1.500 0 011.500 0H8v5.500h6v9a1.500 1.500 0 01-1.500 1.500h-11A1.500 1.500 0 010 14.500zM9.500 0L14 4.200H9.500z" /></svg>
          Membership Payment Email Send Flow - V3
          <Triangle s={10} c="#fff" />
        </HeaderCell>
        <HeaderRight>
          <ScrollToggle>Enable flow scrollability<input type="checkbox" defaultChecked /></ScrollToggle>
          <HelpButton aria-label="Help">?<Triangle s={6} c="#fff" /></HelpButton>
        </HeaderRight>
      </Header>
      <Toolbar>
        <Button aria-label="Toggle toolbox"><svg width="12" height="10" viewBox="0 0 12 10"><rect x=".7" y=".7" width="10.600" height="8.600" fill="none" stroke="#747474" strokeWidth="1.400" /><rect x="2" y="2" width="3" height="6" fill="#555" /></svg></Button>
        <Button aria-label="Select elements"><svg width="14" height="14" viewBox="0 0 14 14"><path d="M4 0h8.500A1.500 1.500 0 0114 1.500V10h-1.500V1.500H4z" fill="#666" /><rect y="3" width="11" height="11" rx="1.500" fill="#666" /><path d="M3 8.500l2 2 3.500-4" stroke="#fff" strokeWidth="1.500" fill="none" /></svg></Button>
        <Group>
          <Button $kind="disabled" aria-label="Undo"><Undo /></Button>
          <Button $kind="disabled" aria-label="Redo"><Undo flip /></Button>
        </Group>
        <Button $kind="brand" aria-label="Errors and warnings"><svg width="14" height="14" viewBox="0 0 14 14" fill="none" stroke="#fff" strokeWidth="1.700"><circle cx="7" cy="7" r="6" /><path d="M11 3l-8 8" /></svg></Button>
        <Button aria-label="Settings"><svg width="14" height="14" viewBox="0 0 14 14" fill="none" stroke="#666"><circle cx="7" cy="7" r="4" strokeWidth="2" /><circle cx="7" cy="7" r="1" strokeWidth="1" /><path d="M7 .5v2.500M7 11v2.500M1.200 3.700l2.200 1.200M10.600 9.100l2.200 1.200M1.200 10.300l2.200-1.200M10.600 4.900l2.200-1.200" strokeWidth="2.600" /></svg></Button>
        <Button $w={117} $dark>Auto-Layout<Triangle s={10} /></Button>
        <Spacer />
        <Saved>Last saved on 2025-12-04, 06:23 p.m.</Saved>
        <ActiveBadge>Active</ActiveBadge>
        <Group>
          <Button $w={56}>Run</Button>
          <Button $w={71}>Debug</Button>
        </Group>
        <Button $w={93} $kind="disabled">View Tests</Button>
        <Group>
          <Button $w={152}>Save As New Version</Button>
          <Button aria-label="More save options"><Triangle s={10} /></Button>
        </Group>
        <Button $w={61} $kind="disabled">Save</Button>
        <Button $w={94} $kind="disabled">Deactivate</Button>
      </Toolbar>
    </>
  );
}

function FlowCanvas() {
  const columns = [
    { x: 115, label: "Member", w: 83, title: "Send Member Email" },
    { x: 424, label: "Contributor Only", w: 113, title: "Send Contributor Email" },
    { x: 733, label: "Non-Member", w: 95, title: "Send NonMember Email" },
  ];
  return (
    <CanvasArea>
      <Canvas>
        <Wires width="1200" height="320" fill="none" stroke="#706e6b" strokeWidth="2">
          <path strokeWidth="3" d="M579 56v18q0 15 -15 15H130M579 74q0 15 15 15H1200" />
          <path d="M115 108v-4q0 -15 15 -15M424 108v-4q0 -15 15 -15M733 108v-4q0 -15 -15 -15M115 132v168M424 132v168M733 132v168" />
        </Wires>
        <Node $x={436} $y={-18} $h={74}><Diamond /><NodeText><h3>Choose Template by Membership Status</h3>Decision</NodeText></Node>
        {columns.map((c, i) => (
          <React.Fragment key={c.label}>
            <Branch $x={c.x - Math.floor(c.w / 2)} $w={c.w}>{c.label}</Branch>
            <AddButton $x={c.x} $y={147} aria-label={"Add element after " + c.label}><Plus /></AddButton>
            <Node $x={c.x - 142} $y={186} $h={60} $selected={i === 2}>
              <Bolt />
              <NodeText><h3>{c.title}</h3>Action</NodeText>
              {i === 2 && <svg width="24" height="18" fill="#666"><circle cx="4" cy="3" r="1.500" /><circle cx="4" cy="9" r="1.500" /><circle cx="4" cy="15" r="1.500" /></svg>}
            </Node>
            <AddButton $x={c.x} $y={261} aria-label={"Add element before end of " + c.label}><Plus /></AddButton>
            <Node $x={c.x - 142} $y={300} $h={58}><EndIcon /><NodeText><h3>End</h3></NodeText></Node>
          </React.Fragment>
        ))}
        <ZoomBar>
          <Group>
            <Button aria-label="Zoom out"><svg width="14" height="3"><path d="M0 1.500h14" stroke="#555" strokeWidth="2.500" /></svg></Button>
            <Button aria-label="Zoom to fit"><svg width="14" height="14" viewBox="0 0 14 14" fill="none" stroke="#555" strokeWidth="1.700"><path d="M13 1L8.500 5.500M8.500 1.500v4h4M1 13l4.500-4.500M1.500 8.500h4v4" /></svg></Button>
            <Button $kind="disabled" aria-label="Zoom in"><Plus c="#b6b6b6" s={12} w={1.5} /></Button>
          </Group>
        </ZoomBar>
      </Canvas>
      <HScroll />
    </CanvasArea>
  );
}

type ResourceProps = { id: string; label: string; placeholder?: string; type?: "text" | "object"; toggle?: boolean; pill?: string; gap?: number };

function ResourceField({ id, label, placeholder, type, toggle, pill, gap }: ResourceProps) {
  return (
    <Field $gap={gap}>
      <FieldLabel>
        {toggle ? <svg width="13" height="12" viewBox="0 0 14 12" fill="none" stroke="#666" strokeWidth="1.600"><circle cx="5" cy="6" r="4" /><circle cx="9" cy="6" r="4" /></svg> : <TypeText s={13} />}
        <label htmlFor={id}>{label}</label>
        <Info />
      </FieldLabel>
      <FieldRow>
        {type && (
          <TypeButton aria-label={"Type for " + label}>
            {type === "text" ? <TypeText s={14} /> : <svg width="14" height="10" viewBox="0 0 14 10" fill="none" stroke="#666"><rect x=".5" y=".5" width="13" height="9" /><path d="M3 7.500l1.500-4 1.500 4M2 7.500h5" /></svg>}
            <Triangle s={6} />
          </TypeButton>
        )}
        <Lookup>
          {pill && (
            <Pill>{!type && <TypeText s={18} />}{pill}<button aria-label={"Remove " + pill}><Cross s={12} w={1} c="#666" /></button></Pill>
          )}
          <input id={id} placeholder={placeholder} />
          {!pill && <Glass />}
        </Lookup>
      </FieldRow>
    </Field>
  );
}

function Properties() {
  return (
    <RightPanel>
      <PropertyHead><Bolt s={24} /><h2>Send Email</h2><IconButton $size={12} aria-label="Close panel"><Cross s={11} w={1.2} c="#666" /></IconButton></PropertyHead>
      <PropertyBody>
        <Form>
          <ResourceField id="sender" label="Sender Email Address" placeholder="Search records..." type="text" />
          <SectionTitle><svg width="16" height="10" viewBox="0 0 16 10" fill="none" stroke="#666" strokeWidth="1.800"><path d="M1.500 1L8 8.500 14.500 1" /></svg>Configure Email Content</SectionTitle>
          <Choices>
            <Choice><b>Compose Email Content</b><span>Set email details and compose message.</span></Choice>
            <Choice $on>
              <b>Use Email Template</b>Select an existing email template.
              <Corner width="28" height="28" viewBox="0 0 28 28"><path d="M0 0h28v28z" fill="#1b96ff" /><path d="M12 8l5 5 9-9" fill="none" stroke="#fff" strokeWidth="2" /></Corner>
            </Choice>
          </Choices>
          <ResourceField id="template" label="Email Template ID" type="text" pill="Non Member Payment Confirmation" />
          <ResourceField id="attachment" label="Attachment ID" placeholder="Search records..." type="text" />
          <ResourceField id="collection" label="Attachment ID Collection" placeholder="Enter value or search resources..." gap={38} />
          <ResourceField id="recipient" label="Recipient ID" pill="Account from Get Member Account > Email" gap={38} />
          <ResourceField id="record" label="Related Record ID" placeholder="Search objects..." type="object" />
          <ResourceField id="log" label="Log Email on Send" placeholder="Enter value or search resources..." toggle />
        </Form>
        <VScroll><Triangle s={8} up /><VThumb /><Triangle s={8} /></VScroll>
      </PropertyBody>
      <SideHandle aria-label="Open side tool"><svg width="7" height="12" viewBox="0 0 7 12" fill="#fff"><path d="M7 0v12L0 6z" /></svg></SideHandle>
      <Tips>
        <svg width="16" height="16" viewBox="0 0 16 16" fill="none" stroke="#666"><circle cx="8" cy="8" r="7" strokeWidth="1.300" /><circle cx="8" cy="8" r="4" strokeWidth="1.300" /><path d="M3 3l2.300 2.300M13 3l-2.300 2.300M3 13l2.300-2.300M13 13l-2.300-2.300" strokeWidth="2.500" /></svg>
        <strong>Tips</strong><Count>1</Count><Spacer />
        <IconButton aria-label="Minimize tips"><svg width="13" height="14"><path d="M0 12h13" stroke="#555" strokeWidth="1.500" /></svg></IconButton>
        <IconButton aria-label="Close tips"><Cross s={11} w={1.3} c="#555" /></IconButton>
      </Tips>
    </RightPanel>
  );
}

function SaveDialog() {
  return (
    <Overlay>
      <Dialog role="dialog" aria-labelledby="save-title">
        <DialogClose aria-label="Close"><Cross s={18} w={1.4} c="#666" /></DialogClose>
        <DialogCard onSubmit={(e) => e.preventDefault()}>
          <DialogTitle id="save-title">Save as</DialogTitle>
          <DialogBody>
            <Item $wide $below={40}>
              <label htmlFor="save-as">Save As</label>
              <SelectWrap>
                <Select id="save-as"><option>A New Version</option><option>A New Flow</option></Select>
                <svg width="8" height="18" viewBox="0 0 8 18" fill="#222"><path d="M1 6l3-5 3 5zM1 12l3 5 3-5z" /></svg>
              </SelectWrap>
            </Item>
            <Item>
              <label htmlFor="flow-label"><em>*</em>Flow Label</label>
              <TextInput id="flow-label" defaultValue="Membership Payment Email Send Flow" />
            </Item>
            <Item>
              <label htmlFor="api-name"><em>*</em>Flow API Name<Info /></label>
              <TextInput id="api-name" disabled defaultValue="Membership_Payment_Email_Send_Flow" />
            </Item>
            <Item $wide>
              <label htmlFor="description">Description</label>
              <TextArea id="description" />
            </Item>
            <Advanced href="#">Show Advanced</Advanced>
          </DialogBody>
          <DialogFooter>
            <Button type="button" $w={71}>Cancel</Button>
            <Button $w={60} $kind="brand">Save</Button>
          </DialogFooter>
        </DialogCard>
      </Dialog>
    </Overlay>
  );
}

function Desktop() {
  return (
    <Taskbar>
      <Weather>
        <svg width="24" height="26" viewBox="0 0 24 26"><path d="M15 2c8 2 11 11 6 17-4 5-12 5-16 0 9 1 15-6 10-17z" fill="#f2a32c" /><path d="M3 10a3.500 3.500 0 010-6 5 5 0 019 0 3 3 0 011 6z" fill="#a9c8f8" /></svg>
        <div>73°F<span>Mostly clear</span></div>
      </Weather>
      <Apps>
        <AppButton aria-label="Start"><svg width="23" height="23" viewBox="0 0 23 23" fill="#3dbbf7"><path d="M0 0h11v11H0zM12 0h11v11H12zM0 12h11v11H0zM12 12h11v11H12z" /></svg></AppButton>
        <SearchPill>
          <Glass c="#e4e4e4" />
          <input aria-label="Search" placeholder="Search" />
          <svg width="44" height="28" viewBox="0 0 44 28"><circle cx="21" cy="13" r="11.500" fill="#f4cf85" /><circle cx="17" cy="10" r="2.500" fill="#dfb068" /><circle cx="25" cy="15" r="2" fill="#dfb068" /><circle cx="22" cy="7" r="1.500" fill="#e3b871" /><path d="M0 26l3-9 3 5 3-7 4 11zM30 26l3-10 3 6 3-9 4 13z" fill="#4356b5" /><path d="M2 25c8-5 14-1 20-3s14 0 20 3c-8 4-32 4-40 0z" fill="#c5d4ec" /></svg>
        </SearchPill>
        {appIcons.map((a) => <AppButton key={a.name} aria-label={a.name} $state={a.state}>{a.icon}</AppButton>)}
      </Apps>
      <Tray>
        <svg width="18" height="10" viewBox="0 0 18 10" fill="none" stroke="#fff" strokeWidth="1.600"><path d="M4 8l5-5 5 5" /></svg>
        <svg width="18" height="12" viewBox="0 0 18 12" fill="#d8d8d8"><path d="M4 12a4 4 0 01-.5-7.500A5.500 5.500 0 0114 4a4 4 0 010 8z" /></svg>
        <svg width="17" height="12" viewBox="0 0 17 12" fill="none" stroke="#fff"><rect x=".5" y=".5" width="16" height="11" rx="1" /><path d="M3 3.500h11M3 6h11" strokeDasharray="1.500 1.500" strokeWidth="1.400" /><path d="M5 9h7" /></svg>
        <Sound>
          <svg width="17" height="13" viewBox="0 0 17 13" fill="none" stroke="#fff" strokeWidth="1.400"><path d="M1 4.500a10.500 10.500 0 0115 0M3.500 7.200a7 7 0 0110 0M6 9.700a3.500 3.500 0 015 0" /><circle cx="8.500" cy="11.500" r="1" fill="#fff" /></svg>
          <svg width="17" height="14" viewBox="0 0 17 14" fill="none" stroke="#fff" strokeWidth="1.200"><path d="M1 5h2.500L7 1.500v11L3.500 9H1zM9 5a3 3 0 010 4M11 3a6 6 0 010 8M13 1a9 9 0 010 12" /></svg>
        </Sound>
        <ClockGroup>
          <Clock>6:23 PM<br />12/4/2025</Clock>
          <svg width="16" height="16" viewBox="0 0 16 16" fill="#6fd3f7"><path d="M8 0a5 5 0 015 5v4l2 3H1l2-3V5a5 5 0 015-5zM6 13h4a2 2 0 01-4 0z" /></svg>
        </ClockGroup>
      </Tray>
    </Taskbar>
  );
}

export default function App() {
  return (
    <Screen>
      <Global />
      <Browser />
      <Builder>
        <TopBars />
        <Work>
          <LeftPanel>
            <PanelHead>
              <h2>Errors and Warnings</h2>
              <IconButton $size={16} aria-label="Dock panel"><svg width="14" height="12" viewBox="0 0 14 12" fill="none" stroke="#666" strokeWidth="1.700"><path d="M0 6h9.500M6 2l4 4-4 4M13 0v12" /></svg></IconButton>
              <IconButton $size={16} aria-label="Close panel"><Cross s={11} w={1.2} c="#666" /></IconButton>
            </PanelHead>
            <PanelTabs><PanelTab $on>Errors (0)</PanelTab><PanelTab>Warnings (0)</PanelTab></PanelTabs>
            <PanelMessage>You have 0 errors.</PanelMessage>
            <Grip><svg width="7" height="13" fill="#444"><circle cx="1.500" cy="1.500" r="1.200" /><circle cx="5.500" cy="1.500" r="1.200" /><circle cx="1.500" cy="6.500" r="1.200" /><circle cx="5.500" cy="6.500" r="1.200" /><circle cx="1.500" cy="11.500" r="1.200" /><circle cx="5.500" cy="11.500" r="1.200" /></svg></Grip>
          </LeftPanel>
          <FlowCanvas />
          <Properties />
        </Work>
        <SaveDialog />
        <Pointer width="13" height="20" viewBox="0 0 13 20"><path d="M1 1v15.500l3.700-3.500 2.400 5.700 2.300-1-2.400-5.500H12z" fill="#fff" stroke="#111" /></Pointer>
      </Builder>
      <Desktop />
    </Screen>
  );
}
